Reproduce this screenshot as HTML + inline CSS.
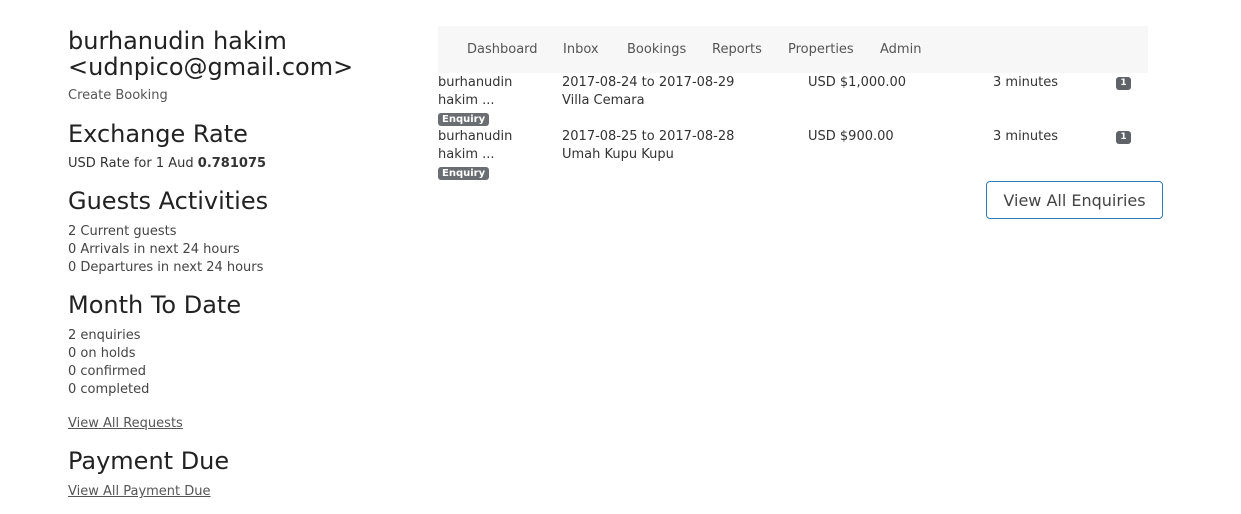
<!DOCTYPE html>
<html><head><meta charset="utf-8"><style>
body{margin:0;width:1241px;height:514px;background:#fff;font-family:"DejaVu Sans","Liberation Sans",sans-serif;color:#333;position:relative;overflow:hidden}
.a{position:absolute;white-space:nowrap;font-size:13px;line-height:18px}
.h{position:absolute;white-space:nowrap;font-size:24px;line-height:26px;color:#222}
.lk{color:#555;text-decoration:underline}
.nav{position:absolute;left:438px;top:26px;width:710px;height:47px;background:#f7f7f7}
.nav span{position:absolute;top:16px;font-size:13px;color:#555}
.badge{position:absolute;background:#6a6e73;color:#fff;font-weight:bold;font-size:10px;line-height:13px;border-radius:3px;padding:0 4px}
.one{position:absolute;background:#5f6368;color:#fff;font-weight:bold;font-size:9px;line-height:13px;width:15px;text-align:center;border-radius:3px}
.btn{position:absolute;left:986px;top:181px;width:175px;height:36px;border:1px solid #337ab7;border-radius:4px;font-size:16px;line-height:37px;text-align:center;color:#444}
</style></head><body>
<div class="h" style="left:68px;top:28px">burhanudin hakim<br>&lt;udnpico@gmail.com&gt;</div>
<div class="a" style="left:68px;top:87px;color:#555">Create Booking</div>
<div class="h" style="left:68px;top:121px">Exchange Rate</div>
<div class="a" style="left:68px;top:155px">USD Rate for 1 Aud <b>0.781075</b></div>
<div class="h" style="left:68px;top:188px">Guests Activities</div>
<div class="a" style="left:68px;top:223px;color:#444">2 Current guests<br>0 Arrivals in next 24 hours<br>0 Departures in next 24 hours</div>
<div class="h" style="left:68px;top:292px">Month To Date</div>
<div class="a" style="left:68px;top:327px;color:#444">2 enquiries<br>0 on holds<br>0 confirmed<br>0 completed</div>
<div class="a lk" style="left:68px;top:415px">View All Requests</div>
<div class="h" style="left:68px;top:448px">Payment Due</div>
<div class="a lk" style="left:68px;top:483px">View All Payment Due</div>

<div class="nav">
<span style="left:29px">Dashboard</span><span style="left:125px">Inbox</span><span style="left:189px">Bookings</span><span style="left:274px">Reports</span><span style="left:350px">Properties</span><span style="left:442px">Admin</span>
</div>

<div class="a" style="left:438px;top:74px">burhanudin<br>hakim ...</div>
<div class="badge" style="left:438px;top:113px">Enquiry</div>
<div class="a" style="left:562px;top:74px">2017-08-24 to 2017-08-29<br>Villa Cemara</div>
<div class="a" style="left:808px;top:74px">USD $1,000.00</div>
<div class="a" style="left:993px;top:74px">3 minutes</div>
<div class="one" style="left:1116px;top:77px">1</div>

<div class="a" style="left:438px;top:128px">burhanudin<br>hakim ...</div>
<div class="badge" style="left:438px;top:167px">Enquiry</div>
<div class="a" style="left:562px;top:128px">2017-08-25 to 2017-08-28<br>Umah Kupu Kupu</div>
<div class="a" style="left:808px;top:128px">USD $900.00</div>
<div class="a" style="left:993px;top:128px">3 minutes</div>
<div class="one" style="left:1116px;top:131px">1</div>

<div class="btn">View All Enquiries</div>
</body></html>
